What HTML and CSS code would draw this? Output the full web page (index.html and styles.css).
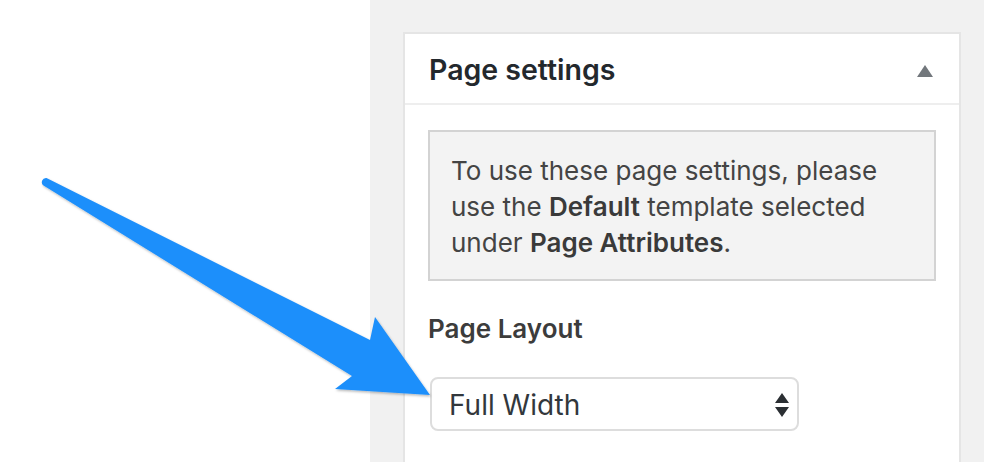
FILE: index.html
```html
<!DOCTYPE html>
<html lang="en">
<head>
<meta charset="utf-8">
<title>Page settings</title>
<link rel="stylesheet" href="styles.css">
</head>
<body>
<div class="page">
  <div class="canvas"></div>
  <div class="sidebar">
    <div class="panel">
      <div class="panel-header">
        <h2 class="panel-title">Page settings</h2>
        <span class="toggle"></span>
      </div>
      <div class="panel-body">
        <div class="notice">To use these page settings, please use the <strong>Default</strong> template selected under <strong>Page Attributes</strong>.</div>
        <div class="field-label">Page Layout</div>
        <div class="select">
          <span class="select-value">Full Width</span>
          <svg class="select-arrows" width="14" height="24" viewBox="0 0 14 24"><path d="M7 0 L14 10 L0 10 Z M0 14 L14 14 L7 24 Z" fill="#2b2f33"/></svg>
        </div>
      </div>
    </div>
  </div>
  <svg class="pointer" width="984" height="462" viewBox="0 0 984 462">
    <defs>
      <filter id="sh" x="-10%" y="-10%" width="130%" height="130%">
        <feDropShadow dx="1" dy="1.5" stdDeviation="1.2" flood-color="#000" flood-opacity="0.28"/>
      </filter>
    </defs>
    <path filter="url(#sh)" fill="#1e8ffb" d="M46.5 178 L370 340 L375 317 L430 395 L335 389 L352 376 L43.5 185.5 A4.2 4.2 0 0 1 46.5 178 Z"/>
  </svg>
</div>
</body>
</html>
```
FILE: styles.css
```css
* { box-sizing: border-box; }
html, body { margin: 0; padding: 0; }
body {
  font-family: Inter, "Noto Sans", "Liberation Sans", sans-serif;
  background: #fff;
}
.page {
  position: relative;
  display: flex;
  width: 984px;
  height: 462px;
  overflow: hidden;
}
.canvas {
  width: 370px;
  flex: none;
  background: #fff;
}
.sidebar {
  flex: 1;
  background: #f1f1f1;
  padding: 32px 23px 0 33px;
  display: flex;
}
.panel {
  flex: 1;
  background: #fff;
  border: 2px solid #e5e5e5;
  border-bottom: none;
}
.panel-header {
  height: 71px;
  border-bottom: 2px solid #eeeeee;
  display: flex;
  align-items: center;
  justify-content: space-between;
  padding: 2px 26px 0 24px;
}
.panel-title {
  margin: 0;
  font-size: 28.5px;
  font-weight: 600;
  color: #23282d;
}
.toggle {
  width: 0;
  height: 0;
  border-left: 8px solid transparent;
  border-right: 8px solid transparent;
  border-bottom: 12px solid #72777c;
  margin-top: 2px;
}
.panel-body {
  padding: 25px 23px;
}
.notice {
  background: #f3f3f3;
  border: 2px solid #d3d3d3;
  padding: 21px 22px 18px 21px;
  font-size: 26px;
  line-height: 36px;
  color: #444;
}
.notice strong {
  font-weight: 600;
  color: #3a3a3a;
}
.field-label {
  margin-top: 31px;
  font-size: 26px;
  font-weight: 600;
  line-height: 34px;
  color: #3c3c3c;
}
.select {
  margin: 31px 0 0 2px;
  width: 369px;
  height: 54px;
  border: 2px solid #dddddd;
  border-radius: 8px;
  display: flex;
  align-items: center;
  justify-content: space-between;
  padding: 2px 8px 0 17px;
  font-size: 28px;
  color: #32373c;
}
.select-arrows { display: block; }
.pointer {
  position: absolute;
  left: 0;
  top: 0;
  pointer-events: none;
}
```
